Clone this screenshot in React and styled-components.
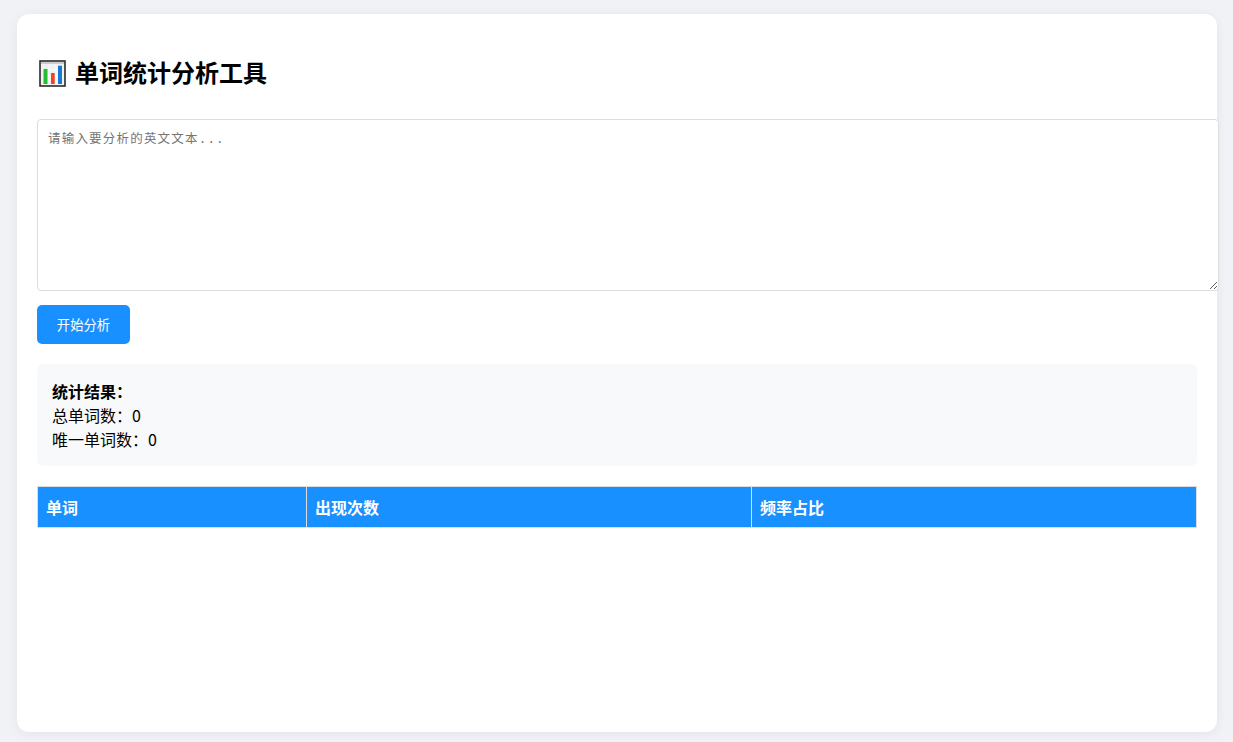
import React from 'react';
import styled, { createGlobalStyle } from 'styled-components';

const GlobalStyle = createGlobalStyle`
  html, body { margin: 0; padding: 0; }
  body {
    min-height: 742px;
    background: #f0f2f5;
    font-family: "Noto Sans CJK SC", "Liberation Sans", sans-serif;
    overflow: hidden;
  }
`;

const Page = styled.div`
  display: flex;
  justify-content: center;
  padding: 14px 16px 10px 17px;
`;

const Card = styled.main`
  width: 1200px;
  height: 718px;
  box-sizing: border-box;
  padding: 20px;
  background: #fff;
  border-radius: 12px;
  box-shadow: 0 2px 12px rgba(0, 0, 0, 0.06);
`;

const Title = styled.h2`
  display: flex;
  align-items: center;
  gap: 9px;
  height: 38px;
  margin: 19px 0 28px;
  font-size: 24px;
  line-height: 38px;
  font-weight: 700;
  color: #000;
`;

const ChartIcon = styled.svg`
  width: 27px;
  height: 27px;
  margin: 3px 0 0 2px;
  flex: none;
`;

const TextBox = styled.textarea`
  display: block;
  width: 1160px;
  height: 150px;
  padding: 10px;
  margin: 0 0 14px;
  border: 1px solid #ddd;
  border-radius: 4px;
  background: #fff;
  font-family: "Liberation Mono", "Noto Sans CJK SC", monospace;
  font-size: 12.5px;
  line-height: 21px;
  letter-spacing: 1.2px;
  outline: none;

  &::placeholder { color: #757575; }
`;

const Button = styled.button`
  display: block;
  width: 93px;
  height: 39px;
  padding: 0;
  border: none;
  border-radius: 5px;
  background: #1890ff;
  color: #fff;
  font-family: inherit;
  font-size: 13.33px;
`;

const Stats = styled.section`
  margin: 20px 0;
  padding: 15px;
  height: 72px;
  background: #f8f9fa;
  border-radius: 6px;
  font-size: 16px;
  line-height: 24px;
  color: #000;
`;

const Table = styled.table`
  width: 1159px;
  table-layout: fixed;
  border-collapse: collapse;
`;

const Head = styled.th`
  width: ${props => props.$width}px;
  height: 40px;
  box-sizing: border-box;
  padding: 8px;
  border: 1px solid #ddd;
  background: #1890ff;
  color: #fff;
  font-size: 16px;
  line-height: 24px;
  font-weight: 700;
  text-align: left;
`;

const App = () => (
  <Page>
    <GlobalStyle />
    <Card>
      <Title>
        <ChartIcon viewBox="0 0 27 27" aria-hidden="true">
          <rect x="1" y="1" width="25" height="25" fill="#f1f1f1" stroke="#2a2a2a" strokeWidth="1.6" />
          <path d="M2 3h23" stroke="#bdbdbd" strokeWidth="1.5" />
          <path d="M10 4v20M17 4v20M2 10h23M2 17h23" stroke="#fafafa" strokeWidth="1" />
          <rect x="4.5" y="9" width="4" height="15" fill="#22c02c" />
          <rect x="12" y="13" width="3.7" height="11" fill="#ee4324" />
          <rect x="19" y="5.7" width="4" height="18.3" fill="#1479d8" />
        </ChartIcon>
        单词统计分析工具
      </Title>
      <TextBox placeholder="请输入要分析的英文文本..." />
      <Button>开始分析</Button>
      <Stats>
        <strong>统计结果：</strong>
        <br />
        总单词数：0
        <br />
        唯一单词数：0
      </Stats>
      <Table>
        <thead>
          <tr>
            <Head $width={269}>单词</Head>
            <Head $width={445}>出现次数</Head>
            <Head $width={445}>频率占比</Head>
          </tr>
        </thead>
      </Table>
    </Card>
  </Page>
);

export default App;
